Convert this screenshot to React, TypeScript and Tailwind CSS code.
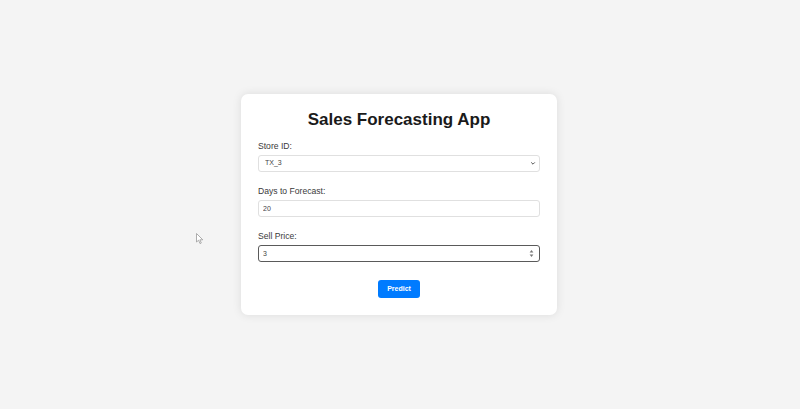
import React from "react";

export default function App() {
  return (
    <div
      className="relative w-full h-[409px] bg-[#f4f4f4] flex items-center justify-center"
      style={{ fontFamily: '"Liberation Sans", Arial, sans-serif' }}
    >
      <div className="w-[316px] mr-[2px] bg-white rounded-[7px] shadow-[0_0_10px_rgba(0,0,0,0.1)] px-[17px] pt-[14px] pb-[17px] flex flex-col">
        <h1 className="text-[17px] leading-[24px] font-bold text-center text-[#1a1a1a]">
          Sales Forecasting App
        </h1>

        <label className="mt-[9px] text-[8.6px] leading-[11px] text-[#3a3a3a]">Store ID:</label>
        <div className="relative mt-[3px] h-[17px]">
          <select
            defaultValue="TX_3"
            className="block appearance-none w-full h-[17px] border border-[#e0e0e0] rounded-[3px] bg-white pl-[6px] text-[7px] text-[#444] outline-none"
          >
            <option value="TX_3">TX_3</option>
          </select>
          <svg
            className="absolute right-[4px] top-[6px] pointer-events-none"
            width="6"
            height="5"
            viewBox="0 0 6 5"
          >
            <path d="M1.2 1.4 L3 3.2 L4.8 1.4" fill="none" stroke="#555" strokeWidth="1" />
          </svg>
        </div>

        <label className="mt-[14px] text-[8.6px] leading-[11px] text-[#3a3a3a]">Days to Forecast:</label>
        <input
          type="text"
          defaultValue="20"
          className="block mt-[3px] w-full h-[17px] border border-[#e0e0e0] rounded-[3px] bg-white px-[4px] text-[7px] text-[#444] outline-none"
        />

        <label className="mt-[14px] text-[8.6px] leading-[11px] text-[#3a3a3a]">Sell Price:</label>
        <div className="relative mt-[3px] h-[17px]">
          <input
            type="text"
            defaultValue="3"
            className="block w-full h-[17px] border-[1.5px] border-[#5a5a5a] rounded-[3px] bg-white px-[4px] text-[7px] text-[#444] outline-none"
          />
          <svg
            className="absolute right-[6px] top-[4px] pointer-events-none"
            width="5"
            height="9"
            viewBox="0 0 5 9"
          >
            <path d="M0.6 3.6 L2.5 1 L4.4 3.6 Z" fill="#777" />
            <path d="M0.6 5.4 L2.5 8 L4.4 5.4 Z" fill="#777" />
          </svg>
        </div>

        <div className="flex justify-center mt-[18px]">
          <button className="w-[42px] h-[18px] bg-[#007bff] rounded-[3px] text-white text-[7px] font-bold">
            Predict
          </button>
        </div>
      </div>

      <svg
        className="absolute left-[196px] top-[233px]"
        width="8"
        height="12"
        viewBox="0 0 8 12"
      >
        <path
          d="M0.5 0.5 L0.5 9 L2.6 7.2 L4 10.6 L5.3 10 L3.9 6.8 L6.8 6.8 Z"
          fill="#fff"
          stroke="#999"
          strokeWidth="0.8"
        />
      </svg>
    </div>
  );
}
